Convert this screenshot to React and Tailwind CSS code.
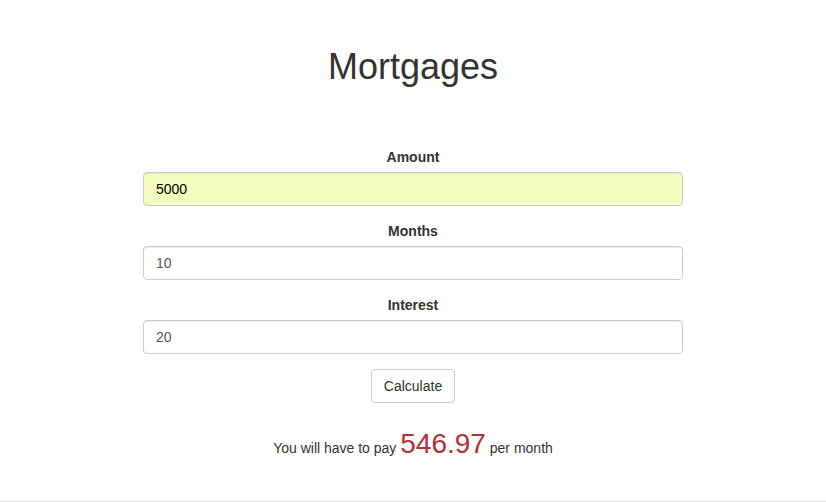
import { useState } from "react";

export default function App() {
    const [amount, setAmount] = useState("5000");
    const [months, setMonths] = useState("10");
    const [interest, setInterest] = useState("20");

    const fields = [
        { id: "amount", label: "Amount", value: amount, set: setAmount, filled: true },
        { id: "months", label: "Months", value: months, set: setMonths },
        { id: "interest", label: "Interest", value: interest, set: setInterest },
    ];

    return (
        <div className="h-[502px] border-b border-[#e5e5e5] bg-white text-[#333] text-sm" style={{ fontFamily: '"Liberation Sans", Arial, sans-serif' }}>
            <h1 className="pt-[47px] text-center text-[36px] leading-[1.1] font-normal">Mortgages</h1>
            <form className="mx-auto mt-[60px] w-[540px]" onSubmit={(e) => e.preventDefault()}>
                {fields.map((f) => (
                    <div key={f.id} className="mb-[15px]">
                        <label htmlFor={f.id} className="mb-[5px] block text-center font-bold leading-5">{f.label}</label>
                        <input
                            id={f.id}
                            type="text"
                            value={f.value}
                            onChange={(e) => f.set(e.target.value)}
                            className={`block h-[34px] w-full rounded-[4px] border border-[#ccc] px-3 py-1.5 leading-5 shadow-[inset_0_1px_1px_rgba(0,0,0,0.075)] outline-none ${f.filled ? "bg-[#f4fdbf] text-black" : "bg-white text-[#555]"}`}
                        />
                    </div>
                ))}
                <div className="flex justify-center">
                    <button type="submit" className="h-[34px] rounded-[4px] border border-[#ccc] bg-white px-3 leading-5 text-[#333]">Calculate</button>
                </div>
            </form>
            <p className="mt-[27px] text-center leading-5">
                You will have to pay <span className="text-[28px] leading-none text-[#b5303a]">546.97</span> per month
            </p>
        </div>
    );
}
